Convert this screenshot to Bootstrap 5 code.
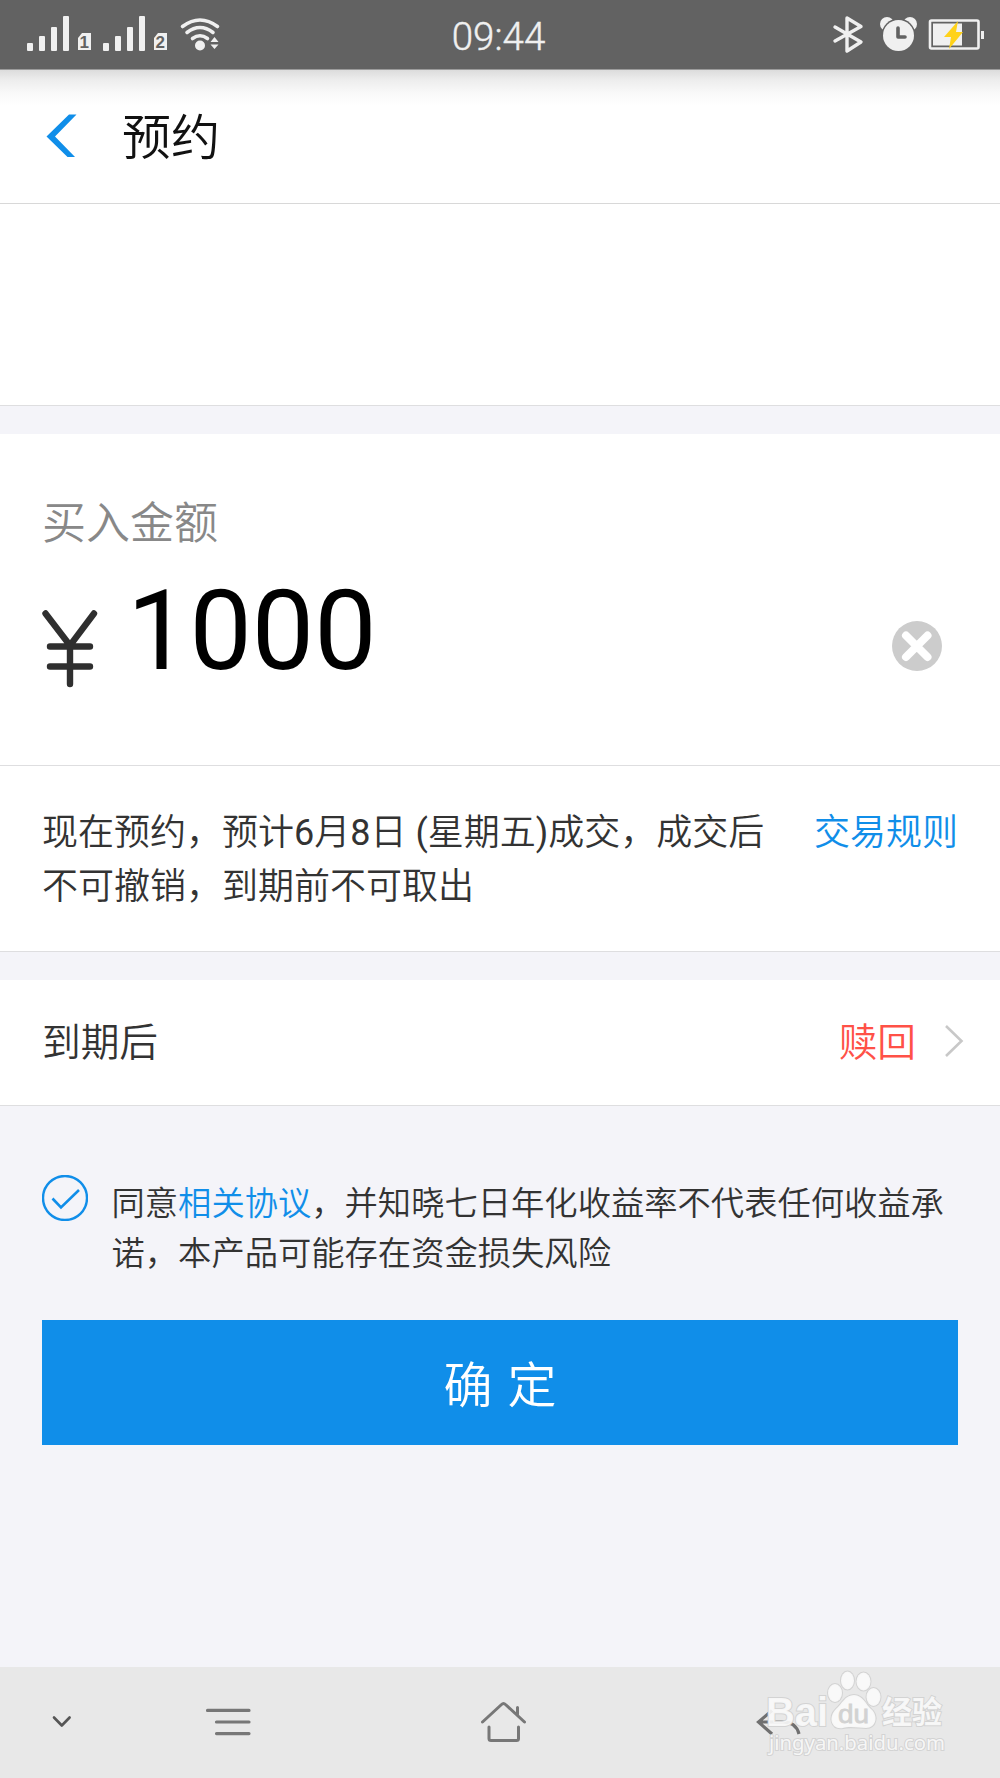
<!DOCTYPE html>
<html lang="zh-CN">
<head>
<meta charset="utf-8">
<meta name="viewport" content="width=device-width, initial-scale=1">
<title>预约</title>
<link href="https://cdn.jsdelivr.net/npm/bootstrap@5.3.0/dist/css/bootstrap.min.css" rel="stylesheet">
<style>
  :root { --blue: #108ee9; --page: #f4f4f9; --line: #dedee0; }
  body { width: 1000px; height: 1778px; background: var(--page); color: #333;
    font-family: Roboto, "Noto Sans CJK SC", sans-serif; font-weight: 350; overflow: hidden; }
  svg { display: block; flex: none; }
  .status { height: 70px; background: #626262; border-bottom: 1px solid #9b9b9b; color: #f0f0f0; }
  .status .clock { font-size: 38.5px; line-height: 74px; -webkit-text-stroke: .4px #f0f0f0; }
  .topbar { height: 134px; border-bottom: 1px solid #d8d8d8;
    background: linear-gradient(#dcdcdc 0, #ededed 10px, #f8f8f8 22px, #fff 36px); }
  .topbar h1 { font-size: 49px; line-height: 137px; font-weight: 350; color: #111; padding-left: 44px; }
  .hair { border-bottom: 1px solid var(--line); }
  .blank { height: 202px; }
  .gap-strip { height: 28px; }
  .amount { height: 332px; padding: 60px 42px 0; }
  .amount .caption-text { font-size: 44px; line-height: 60px; color: #888; }
  .amount .figure-text { font-size: 111px; line-height: 120px; font-weight: 400; color: #000; margin: 17px 0 0 29px; }
  .yen { margin-top: 55px; }
  .clear-btn { margin: 67px 16px 0 0; }
  .notice { height: 186px; padding: 40px 42px 0; font-size: 36px; line-height: 54px; }
  .notice a, .agree a { color: var(--blue); }
  .after { height: 126px; padding: 0 36px 0 42px; font-size: 38.7px; }
  .after span { padding-top: 2px; }
  .after .redeem { color: #ff5147; }
  .after svg { margin-bottom: 4px; }
  .agree { padding: 69px 40px 0 42px; font-size: 33.3px; line-height: 50px; }
  .agree p { margin: 4px 0 0 23.5px; white-space: nowrap; }
  .confirm { height: 125px; margin: 41px 42px 0; padding-top: 14px; background: var(--blue); color: #fff; font-size: 49px;
    font-weight: 350; word-spacing: 3px; border: 0; border-radius: 0; }
  .sysnav { height: 111px; background: #e8e8e8; padding-left: 32px; }
  .nav-menu { margin-left: 106px; }
  .nav-home { margin-left: 215px; }
  .nav-back { margin-left: 216px; }
  .wm { right: 48px; top: 0; }
</style>
<script src="https://cdn.jsdelivr.net/npm/bootstrap@5.3.0/dist/js/bootstrap.bundle.min.js"></script>
</head>
<body class="d-flex flex-column">
  <header class="status d-flex justify-content-between flex-shrink-0">
    <svg width="450" height="69" fill="#f0f0f0">
      <g id="sig"><rect x="27" y="43" width="6" height="8" rx="1"/><rect x="39" y="36" width="6" height="15" rx="1"/><rect x="51" y="27" width="6" height="24" rx="1"/><rect x="63" y="16" width="6" height="35" rx="1"/><path d="M82 33h9v17H78V38z"/></g>
      <use href="#sig" x="76"/>
      <g fill="#626262" font-family="Liberation Sans" font-weight="700" font-size="17"><text x="79.5" y="48">1</text><text x="155.5" y="48">2</text></g>
      <g fill="none" stroke="#f0f0f0" stroke-width="3.6" stroke-linecap="round"><path d="M182.500 26.500Q200 13.500 217.500 26.500M187 32.500Q200 22.500 213 32.500M192.500 38.500Q200 33 207.500 38.500"/></g>
      <circle cx="200" cy="45.500" r="5"/><path d="M214.500 37l4 5h-8zM214.500 49l4-4.500h-8z"/>
    </svg>
    <span class="clock">09:44</span>
    <svg width="453" height="69" viewBox="547 0 453 69">
      <path d="M835 27l26 15-14 9V18l14 8.500L835 41" fill="none" stroke="#f0f0f0" stroke-width="3.400" stroke-linejoin="round" stroke-linecap="round"/>
      <g fill="#f0f0f0"><circle cx="887" cy="24" r="7"/><circle cx="910" cy="24" r="7"/></g>
      <circle cx="898.500" cy="35.500" r="17" fill="#626262"/><circle cx="898.500" cy="35.500" r="15.500" fill="#f0f0f0"/>
      <path d="M898 28v9h7" fill="none" stroke="#626262" stroke-width="3.600" stroke-linecap="round" stroke-linejoin="round"/>
      <rect x="930" y="20.500" width="48.500" height="28" rx="1.500" fill="none" stroke="#f0f0f0" stroke-width="2.600"/>
      <rect x="933" y="23.500" width="29" height="22" fill="#f0f0f0"/><rect x="981" y="31" width="3" height="8" fill="#f0f0f0"/>
      <path d="M958 21l-14 16h7l-2 12 14-17h-7z" fill="#ffd21a"/>
    </svg>
  </header>

  <nav class="topbar d-flex flex-shrink-0">
    <svg width="78" height="133"><path d="M69 44.500h7.500L55 66.500 75 87h-7.500L46.500 66.500z" fill="#108ee9"/></svg>
    <h1 class="mb-0">预约</h1>
  </nav>

  <main class="flex-grow-1">
    <section class="blank bg-white hair"></section>
    <div class="gap-strip"></div>
    <section class="amount bg-white hair">
      <div class="caption-text">买入金额</div>
      <div class="d-flex">
        <svg class="yen" width="56" height="80" viewBox="42 609 56 80"><path d="M45.500 613.500L70 645.500 94 613.500M70 645V684M50 646.500H90M50 666.500H90" fill="none" stroke="#2f2f2f" stroke-width="6.400" stroke-linecap="round"/></svg>
        <div class="figure-text">1000</div>
        <svg class="clear-btn ms-auto" width="50" height="50"><circle cx="25" cy="25" r="25" fill="#ccc"/><path d="M14 14.500l21.500 21.500M35.500 14.500L14 36" stroke="#fff" stroke-width="8" stroke-linecap="round"/></svg>
      </div>
    </section>
    <section class="notice bg-white hair d-flex justify-content-between">
      <div>现在预约，预计<span class="fw-normal">6</span>月<span class="fw-normal">8</span>日<span class="fw-normal"> (</span>星期五<span class="fw-normal">)</span>成交，成交后<br>不可撤销，到期前不可取出</div>
      <a class="text-decoration-none" href="#">交易规则</a>
    </section>
    <div class="gap-strip"></div>
    <section class="after bg-white hair d-flex align-items-center">
      <span>到期后</span>
      <span class="redeem ms-auto">赎回</span>
      <svg class="ms-4" width="24" height="36"><path d="M6 3l15.500 15L6 33" fill="none" stroke="#c8c8c8" stroke-width="2.600"/></svg>
    </section>
    <section class="agree d-flex">
      <svg width="46" height="46"><circle cx="23" cy="23" r="22" fill="none" stroke="#108ee9" stroke-width="2.400"/><path d="M10.500 23.500l8.500 9L37 15" fill="none" stroke="#108ee9" stroke-width="2.600"/></svg>
      <p>同意<a class="text-decoration-none" href="#">相关协议</a>，并知晓七日年化收益率不代表任何收益承<br>诺，本产品可能存在资金损失风险</p>
    </section>
    <div class="d-grid"><button class="btn confirm" type="button">确 定</button></div>
  </main>

  <footer class="sysnav d-flex flex-shrink-0 position-relative">
    <svg width="60" height="111" viewBox="32 1669 60 111"><path d="M54 1719.500l7.800 8 7.800-8" fill="none" stroke="#555" stroke-width="2.600" stroke-linecap="round" stroke-linejoin="round"/></svg>
    <svg class="nav-menu" width="60" height="111" viewBox="198 1669 60 111"><path d="M207.500 1712.400h41.500M216.500 1724h32.500M216.500 1735.600h32.500" stroke="#777" stroke-width="3.200" stroke-linecap="round"/></svg>
    <svg class="nav-home" width="60" height="111" viewBox="473 1669 60 111"><path d="M482.500 1724l19-17.500q2-2 4 0l19 17.500M517.500 1709.500v7M489 1729v11.500q0 2 2 2h25.500q2 0 2-2V1729" fill="none" stroke="#777" stroke-width="3" stroke-linecap="round"/></svg>
    <svg class="nav-back" width="60" height="111" viewBox="749 1667 60 111"><path d="M772 1710.500l-13.500 11.500 13.500 12M759 1722h24q13 0 16 12" fill="none" stroke="#707070" stroke-width="3.200"/></svg>
    <svg class="wm position-absolute" width="190" height="96" viewBox="762 1667 190 96">
      <g fill="#fafafa" fill-opacity=".92" stroke="#d3d3d3" stroke-width="2" paint-order="stroke">
        <text x="766" y="1726" font-size="40" font-family="Liberation Sans, sans-serif" font-weight="700" textLength="62" lengthAdjust="spacingAndGlyphs">Bai</text>
        <ellipse cx="835" cy="1693" rx="7" ry="9"/><ellipse cx="847.500" cy="1680.500" rx="6.500" ry="9"/><ellipse cx="863.500" cy="1681.500" rx="7" ry="9"/><ellipse cx="873.500" cy="1697" rx="7" ry="9"/>
        <path d="M854 1695c9 0 12 10 17 14 8 7 5 19-5 19-6 0-16-2-23 0-12 2-15-11-7-19 6-5 9-14 18-14z"/>
        <text x="882" y="1723" font-size="31" font-family="Noto Sans CJK SC, sans-serif" font-weight="700" textLength="60" lengthAdjust="spacingAndGlyphs">经验</text>
        <text x="769" y="1750" font-size="20" font-family="Noto Sans, sans-serif" font-weight="400" textLength="176" lengthAdjust="spacingAndGlyphs">jingyan.baidu.com</text>
      </g>
      <text x="838" y="1723" font-size="26" font-family="Liberation Sans, sans-serif" font-weight="400" fill="#d2d2d2" stroke="#d2d2d2" stroke-width=".8" textLength="31" lengthAdjust="spacingAndGlyphs">du</text>
    </svg>
  </footer>
</body>
</html>
